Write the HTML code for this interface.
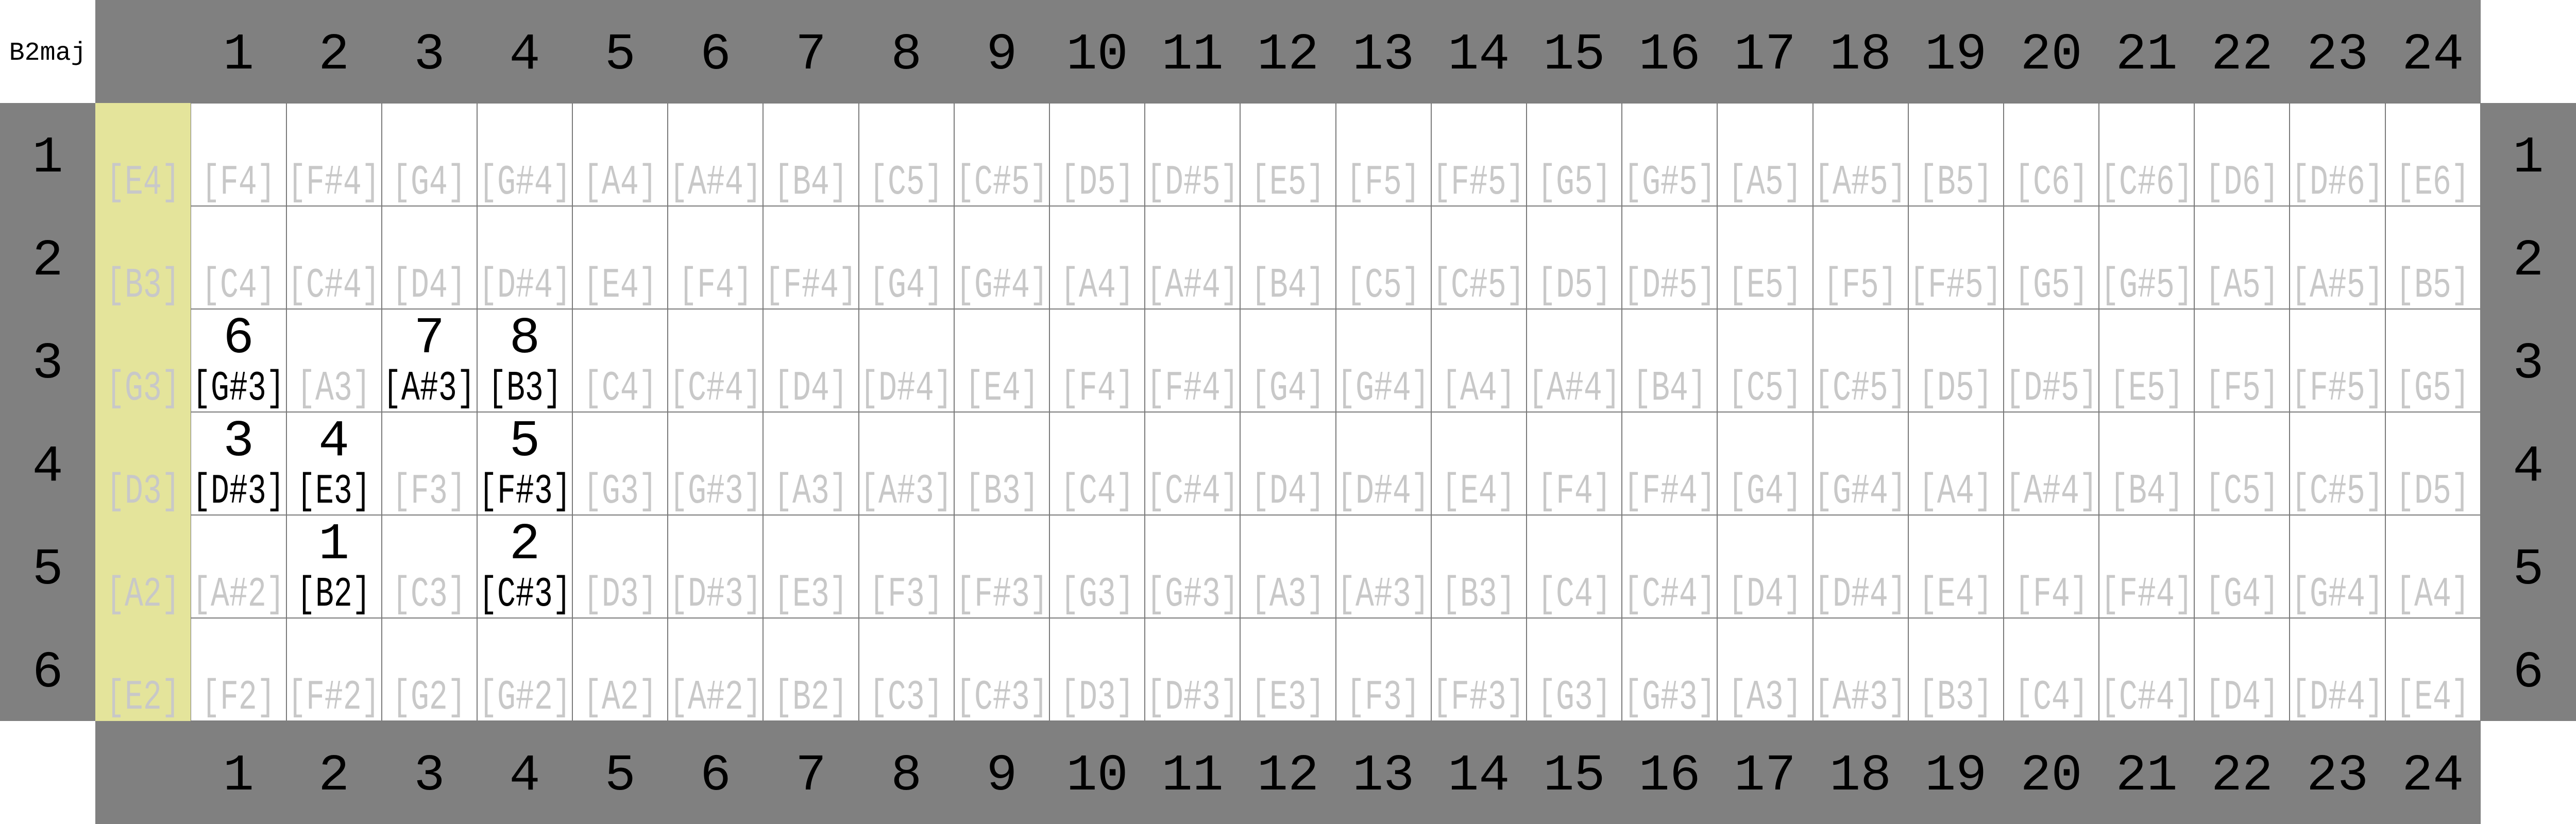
<!DOCTYPE html>
<html><head><meta charset="utf-8"><style>
*{margin:0;padding:0;box-sizing:border-box}
html,body{width:100vw;height:100vh;overflow:hidden;background:#fff}
body{font-family:"Liberation Mono",monospace;color:#000}
#wrap{position:absolute;left:0;top:0;width:100vw;height:100vh;overflow:hidden;display:grid;grid-template-columns:repeat(27,1fr);grid-template-rows:repeat(8,1fr)}
#wrap>div{position:relative;overflow:hidden;min-width:0;min-height:0}
.w{background:#fff}.g{background:#808080}.y{background:#e4e49b}
.f{background:#fff;box-shadow:inset 0 0 0 1px #7a7a7a}
.g b{position:absolute;left:0;right:0;top:3.625vh;text-align:center;font-size:6.25vh;line-height:1;font-weight:normal}
.t{position:absolute;left:0;right:0;top:4.94vh;text-align:center;font-size:3.125vh;line-height:1}
i{position:absolute;left:-25%;right:-25%;top:7.1vh;text-align:center;font-size:5.125vh;line-height:1;transform:scaleX(.73);color:#c8c8c8;font-style:normal;white-space:nowrap}
i.a{color:#000}
.k{position:absolute;left:0;right:0;top:.56vh;text-align:center;font-size:6.25vh;line-height:1}
</style></head><body><div id="wrap">
<div class="w"><span class="t">B2maj</span></div><div class="g"></div><div class="g"><b>1</b></div><div class="g"><b>2</b></div><div class="g"><b>3</b></div><div class="g"><b>4</b></div><div class="g"><b>5</b></div><div class="g"><b>6</b></div><div class="g"><b>7</b></div><div class="g"><b>8</b></div><div class="g"><b>9</b></div><div class="g"><b>10</b></div><div class="g"><b>11</b></div><div class="g"><b>12</b></div><div class="g"><b>13</b></div><div class="g"><b>14</b></div><div class="g"><b>15</b></div><div class="g"><b>16</b></div><div class="g"><b>17</b></div><div class="g"><b>18</b></div><div class="g"><b>19</b></div><div class="g"><b>20</b></div><div class="g"><b>21</b></div><div class="g"><b>22</b></div><div class="g"><b>23</b></div><div class="g"><b>24</b></div><div class="w"></div>

<div class="g"><b>1</b></div><div class="y"><i>[E4]</i></div><div class="f"><i>[F4]</i></div><div class="f"><i>[F#4]</i></div><div class="f"><i>[G4]</i></div><div class="f"><i>[G#4]</i></div><div class="f"><i>[A4]</i></div><div class="f"><i>[A#4]</i></div><div class="f"><i>[B4]</i></div><div class="f"><i>[C5]</i></div><div class="f"><i>[C#5]</i></div><div class="f"><i>[D5]</i></div><div class="f"><i>[D#5]</i></div><div class="f"><i>[E5]</i></div><div class="f"><i>[F5]</i></div><div class="f"><i>[F#5]</i></div><div class="f"><i>[G5]</i></div><div class="f"><i>[G#5]</i></div><div class="f"><i>[A5]</i></div><div class="f"><i>[A#5]</i></div><div class="f"><i>[B5]</i></div><div class="f"><i>[C6]</i></div><div class="f"><i>[C#6]</i></div><div class="f"><i>[D6]</i></div><div class="f"><i>[D#6]</i></div><div class="f"><i>[E6]</i></div><div class="g"><b>1</b></div>

<div class="g"><b>2</b></div><div class="y"><i>[B3]</i></div><div class="f"><i>[C4]</i></div><div class="f"><i>[C#4]</i></div><div class="f"><i>[D4]</i></div><div class="f"><i>[D#4]</i></div><div class="f"><i>[E4]</i></div><div class="f"><i>[F4]</i></div><div class="f"><i>[F#4]</i></div><div class="f"><i>[G4]</i></div><div class="f"><i>[G#4]</i></div><div class="f"><i>[A4]</i></div><div class="f"><i>[A#4]</i></div><div class="f"><i>[B4]</i></div><div class="f"><i>[C5]</i></div><div class="f"><i>[C#5]</i></div><div class="f"><i>[D5]</i></div><div class="f"><i>[D#5]</i></div><div class="f"><i>[E5]</i></div><div class="f"><i>[F5]</i></div><div class="f"><i>[F#5]</i></div><div class="f"><i>[G5]</i></div><div class="f"><i>[G#5]</i></div><div class="f"><i>[A5]</i></div><div class="f"><i>[A#5]</i></div><div class="f"><i>[B5]</i></div><div class="g"><b>2</b></div>

<div class="g"><b>3</b></div><div class="y"><i>[G3]</i></div><div class="f"><span class="k">6</span><i class="a">[G#3]</i></div><div class="f"><i>[A3]</i></div><div class="f"><span class="k">7</span><i class="a">[A#3]</i></div><div class="f"><span class="k">8</span><i class="a">[B3]</i></div><div class="f"><i>[C4]</i></div><div class="f"><i>[C#4]</i></div><div class="f"><i>[D4]</i></div><div class="f"><i>[D#4]</i></div><div class="f"><i>[E4]</i></div><div class="f"><i>[F4]</i></div><div class="f"><i>[F#4]</i></div><div class="f"><i>[G4]</i></div><div class="f"><i>[G#4]</i></div><div class="f"><i>[A4]</i></div><div class="f"><i>[A#4]</i></div><div class="f"><i>[B4]</i></div><div class="f"><i>[C5]</i></div><div class="f"><i>[C#5]</i></div><div class="f"><i>[D5]</i></div><div class="f"><i>[D#5]</i></div><div class="f"><i>[E5]</i></div><div class="f"><i>[F5]</i></div><div class="f"><i>[F#5]</i></div><div class="f"><i>[G5]</i></div><div class="g"><b>3</b></div>

<div class="g"><b>4</b></div><div class="y"><i>[D3]</i></div><div class="f"><span class="k">3</span><i class="a">[D#3]</i></div><div class="f"><span class="k">4</span><i class="a">[E3]</i></div><div class="f"><i>[F3]</i></div><div class="f"><span class="k">5</span><i class="a">[F#3]</i></div><div class="f"><i>[G3]</i></div><div class="f"><i>[G#3]</i></div><div class="f"><i>[A3]</i></div><div class="f"><i>[A#3]</i></div><div class="f"><i>[B3]</i></div><div class="f"><i>[C4]</i></div><div class="f"><i>[C#4]</i></div><div class="f"><i>[D4]</i></div><div class="f"><i>[D#4]</i></div><div class="f"><i>[E4]</i></div><div class="f"><i>[F4]</i></div><div class="f"><i>[F#4]</i></div><div class="f"><i>[G4]</i></div><div class="f"><i>[G#4]</i></div><div class="f"><i>[A4]</i></div><div class="f"><i>[A#4]</i></div><div class="f"><i>[B4]</i></div><div class="f"><i>[C5]</i></div><div class="f"><i>[C#5]</i></div><div class="f"><i>[D5]</i></div><div class="g"><b>4</b></div>

<div class="g"><b>5</b></div><div class="y"><i>[A2]</i></div><div class="f"><i>[A#2]</i></div><div class="f"><span class="k">1</span><i class="a">[B2]</i></div><div class="f"><i>[C3]</i></div><div class="f"><span class="k">2</span><i class="a">[C#3]</i></div><div class="f"><i>[D3]</i></div><div class="f"><i>[D#3]</i></div><div class="f"><i>[E3]</i></div><div class="f"><i>[F3]</i></div><div class="f"><i>[F#3]</i></div><div class="f"><i>[G3]</i></div><div class="f"><i>[G#3]</i></div><div class="f"><i>[A3]</i></div><div class="f"><i>[A#3]</i></div><div class="f"><i>[B3]</i></div><div class="f"><i>[C4]</i></div><div class="f"><i>[C#4]</i></div><div class="f"><i>[D4]</i></div><div class="f"><i>[D#4]</i></div><div class="f"><i>[E4]</i></div><div class="f"><i>[F4]</i></div><div class="f"><i>[F#4]</i></div><div class="f"><i>[G4]</i></div><div class="f"><i>[G#4]</i></div><div class="f"><i>[A4]</i></div><div class="g"><b>5</b></div>

<div class="g"><b>6</b></div><div class="y"><i>[E2]</i></div><div class="f"><i>[F2]</i></div><div class="f"><i>[F#2]</i></div><div class="f"><i>[G2]</i></div><div class="f"><i>[G#2]</i></div><div class="f"><i>[A2]</i></div><div class="f"><i>[A#2]</i></div><div class="f"><i>[B2]</i></div><div class="f"><i>[C3]</i></div><div class="f"><i>[C#3]</i></div><div class="f"><i>[D3]</i></div><div class="f"><i>[D#3]</i></div><div class="f"><i>[E3]</i></div><div class="f"><i>[F3]</i></div><div class="f"><i>[F#3]</i></div><div class="f"><i>[G3]</i></div><div class="f"><i>[G#3]</i></div><div class="f"><i>[A3]</i></div><div class="f"><i>[A#3]</i></div><div class="f"><i>[B3]</i></div><div class="f"><i>[C4]</i></div><div class="f"><i>[C#4]</i></div><div class="f"><i>[D4]</i></div><div class="f"><i>[D#4]</i></div><div class="f"><i>[E4]</i></div><div class="g"><b>6</b></div>

<div class="w"></div><div class="g"></div><div class="g"><b>1</b></div><div class="g"><b>2</b></div><div class="g"><b>3</b></div><div class="g"><b>4</b></div><div class="g"><b>5</b></div><div class="g"><b>6</b></div><div class="g"><b>7</b></div><div class="g"><b>8</b></div><div class="g"><b>9</b></div><div class="g"><b>10</b></div><div class="g"><b>11</b></div><div class="g"><b>12</b></div><div class="g"><b>13</b></div><div class="g"><b>14</b></div><div class="g"><b>15</b></div><div class="g"><b>16</b></div><div class="g"><b>17</b></div><div class="g"><b>18</b></div><div class="g"><b>19</b></div><div class="g"><b>20</b></div><div class="g"><b>21</b></div><div class="g"><b>22</b></div><div class="g"><b>23</b></div><div class="g"><b>24</b></div><div class="w"></div>
</div></body></html>
